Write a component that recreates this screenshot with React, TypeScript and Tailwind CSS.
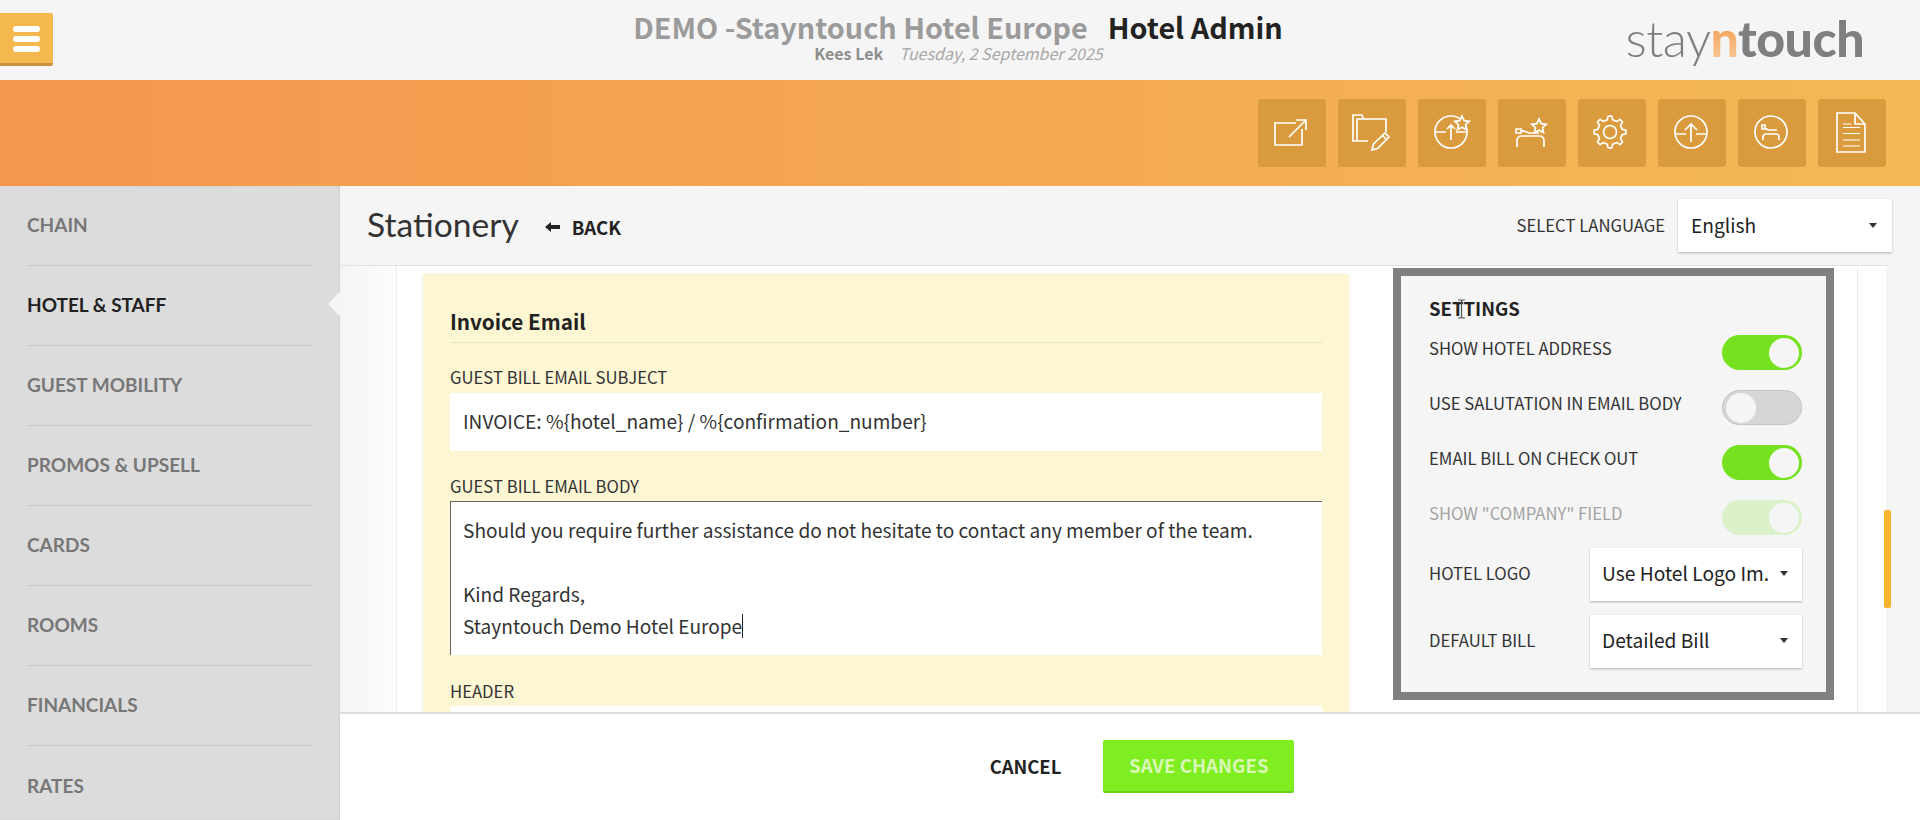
import * as React from "react";

const navigation = ["CHAIN", "HOTEL & STAFF", "GUEST MOBILITY", "PROMOS & UPSELL", "CARDS", "ROOMS", "FINANCIALS", "RATES"];

const toggles = [
  { label: "SHOW HOTEL ADDRESS", on: true },
  { label: "USE SALUTATION IN EMAIL BODY", on: false },
  { label: "EMAIL BILL ON CHECK OUT", on: true },
  { label: 'SHOW "COMPANY" FIELD', on: true, disabled: true },
];

function gearPath(cx: number, cy: number) {
  const pts: string[] = [];
  const teeth = 8;
  for (let i = 0; i < teeth; i++) {
    const a = (i * Math.PI * 2) / teeth - Math.PI / 2;
    const step = Math.PI / teeth;
    const p = (r: number, t: number) => `${(cx + r * Math.cos(t)).toFixed(1)} ${(cy + r * Math.sin(t)).toFixed(1)}`;
    pts.push(`${i === 0 ? "M" : "L"}${p(12.5, a - step * 0.55)}`);
    pts.push(`L${p(16, a - step * 0.3)}`);
    pts.push(`L${p(16, a + step * 0.3)}`);
    pts.push(`L${p(12.5, a + step * 0.55)}`);
  }
  return pts.join(" ") + "Z";
}

const STAR = "M44 17l2.2 4.7 5 .6-3.7 3.4 1 5-4.500-2.500-4.500 2.500 1-5-3.700-3.400 5-.6z";

function TileIcon({ index }: { index: number }) {
  const props = { fill: "none", stroke: "#fff", strokeWidth: 1.7 };
  return (
    <svg viewBox="0 0 68 68" className="w-[68px] h-[68px]" {...props}>
      {index === 0 && (
        <>
          <path d="M38 24H17v22h27V30" />
          <path d="M31 38l17-17M38 21h10v10" />
        </>
      )}
      {index === 1 && (
        <>
          <path d="M30 42H15V16h9l1.500 4H48v13" />
          <path d="M19 42V20h6" />
          <path d="M34 51l1.500-6L47 34l4 4-11.500 11.500zM44.500 36.500l4 4" />
        </>
      )}
      {index === 2 && (
        <>
          <circle cx="33" cy="33" r="16" />
          <path d="M17 33h11M38 33h11M33 41V26M29 30l4-4 4 4" />
          <path d={STAR} fill="#da9a3e" />
        </>
      )}
      {index === 3 && (
        <>
          <path d="M19 48v-6c0-3 2-5 5-5h17c3 0 5 2 5 5v6" />
          <path d="M18 30h5v4h-5zM23 31l8 3h10" />
          <path d={STAR} transform="translate(-3 3)" fill="#da9a3e" />
        </>
      )}
      {index === 4 && (
        <>
          <path d={gearPath(32, 33)} strokeLinejoin="round" />
          <circle cx="32" cy="33" r="6.500" />
        </>
      )}
      {index === 5 && (
        <>
          <circle cx="33" cy="33" r="16" />
          <path d="M17 35h11M38 35h11M33 43V25M27 31l6-6 6 6" />
        </>
      )}
      {index === 6 && (
        <>
          <circle cx="33" cy="33" r="16" />
          <path d="M25 41v-3c0-2 1-3 3-3h10c2 0 3 1 3 3v3M24 26h3v4h-3zM27 29l3 2h9" />
        </>
      )}
      {index === 7 && (
        <>
          <path d="M19 14h18l10 11v28H19z" />
          <path d="M37 14v11h10" />
          <path d="M25 25h8M25 28.500h17M25 34.500h17M25 41h17M25 47h17" strokeWidth="1.200" />
        </>
      )}
    </svg>
  );
}

function Toggle({ label, on, disabled }: { label: string; on: boolean; disabled?: boolean }) {
  return (
    <div className="flex justify-between">
      <span className={`text-[16.7px] leading-[27px] ${disabled ? "text-[#a3a3a3]" : "text-[#333]"}`}>{label}</span>
      <span
        className={`flex items-center h-[35px] w-[80px] rounded-full px-[3px] ${on ? "justify-end bg-[#76e21f]" : "justify-start bg-[#d6d6d6] border border-[#c4c4c4]"} ${disabled ? "opacity-20" : ""}`}
      >
        <span className="h-[30px] w-[30px] rounded-full bg-[#f5f5f5]" />
      </span>
    </div>
  );
}

function Caret() {
  return (
    <svg viewBox="0 0 8 5" className="w-[8px] h-[5px] shrink-0">
      <path d="M0 0h8L4 5z" fill="#333" />
    </svg>
  );
}

function SelectBox({ value, className }: { value: string; className: string }) {
  return (
    <div className={`flex items-center justify-between bg-white h-[53px] text-[19.2px] whitespace-nowrap text-[#222] shadow-[0_1px_2px_rgba(0,0,0,0.28)] ${className}`}>
      <span>{value}</span>
      <Caret />
    </div>
  );
}

export default function App() {
  return (
    <div className="w-[1920px] h-[820px] overflow-hidden flex flex-col relative bg-[#f5f5f5] font-['Noto_Sans_CJK_SC','Liberation_Sans',sans-serif]">
      {/* Top header */}
      <header className="h-[80px] shrink-0 flex items-start justify-between relative">
        <button className="mt-[13px] w-[53px] h-[53px] bg-[#f5b84e] border-b-[3px] border-[#c9923f] rounded-r-[2px] flex flex-col items-center gap-[4px] pt-[13px]">
          <span className="w-[27px] h-[6px] bg-white rounded-full" />
          <span className="w-[27px] h-[6px] bg-white rounded-full" />
          <span className="w-[27px] h-[6px] bg-white rounded-full" />
        </button>
        <div className="absolute left-0 right-0 top-[11px] flex flex-col items-center">
          <div className="text-[28.8px] leading-[32px] font-bold pr-[4px]">
            <span className="text-[#9b9b9b]">DEMO -Stayntouch Hotel Europe</span>
            <span className="text-[#222] ml-[20px]">Hotel Admin</span>
          </div>
          <div className="text-[16px] leading-[20px] pr-[3px]">
            <span className="text-[#8e8e8e] font-semibold">Kees Lek</span>
            <span className="text-[#a8a8a8] italic ml-[16px]">Tuesday, 2 September 2025</span>
          </div>
        </div>
        <div className="mt-[7px] mr-[56px] text-[50px] leading-[62px] font-['Lato',sans-serif] text-[#7f7f7f] tracking-[-0.5px]">
          <span className="font-light">stay</span>
          <span className="font-black bg-gradient-to-b from-[#ee8a22] to-[#f9d3a8] bg-clip-text text-transparent">n</span>
          <span className="font-black">touch</span>
        </div>
      </header>

      {/* Orange action bar */}
      <div className="h-[106px] shrink-0 bg-gradient-to-r from-[#f4964f] to-[#f4b955] flex items-center justify-end gap-[12px] pr-[34px]">
        {[0, 1, 2, 3, 4, 5, 6, 7].map((i) => (
          <div key={i} className="w-[68px] h-[68px] rounded-[3px] bg-[#da9a3e]">
            <TileIcon index={i} />
          </div>
        ))}
      </div>

      <div className="flex flex-1 min-h-0">
        {/* Sidebar */}
        <nav className="w-[340px] shrink-0 bg-[#dcdcdc] relative shadow-[inset_-1px_0_2px_rgba(0,0,0,0.06)]">
          {navigation.map((name, i) => (
            <div
              key={name}
              className={`h-[80px] ml-[27px] mr-[28px] flex items-center font-['Lato',sans-serif] font-bold text-[19px] ${i < 7 ? "border-b border-[#c8c8c8]" : ""} ${i === 1 ? "text-[#222]" : "text-[#777]"}`}
            >
              {name}
            </div>
          ))}
          <div className="absolute left-[328px] top-[106px] w-0 h-0 border-y-[12px] border-y-transparent border-r-[12px] border-r-[#f5f5f5]" />
        </nav>

        <main className="flex-1 min-w-0 flex flex-col">
          {/* Title row */}
          <div className="h-[80px] shrink-0 border-b border-[#e2e2e2] mr-[32px] pl-[27px] flex items-center justify-between">
            <div className="flex items-center">
              <h1 className="text-[33.6px] text-[#333] font-['Lato',sans-serif] leading-[40px] -mt-[3px]">Stationery</h1>
              <svg viewBox="0 0 15 10" className="ml-[26px] mt-[3px] w-[15px] h-[10px]">
                <path d="M0 5l6-5v3h9v4H6v3z" fill="#222" />
              </svg>
              <span className="ml-[12px] mt-[3px] text-[18.6px] font-semibold text-[#222]">BACK</span>
            </div>
            <div className="flex items-center -mr-[4px]">
              <span className="text-[16.7px] text-[#333] mr-[13px]">SELECT LANGUAGE</span>
              <SelectBox value="English" className="w-[214px] pl-[13px] pr-[15px]" />
            </div>
          </div>

          {/* Form body */}
          <div className="flex-1 min-h-0 flex overflow-hidden">
            <div className="w-[56px] shrink-0 bg-gradient-to-r from-[#f5f5f5] to-[#fcfcfc]" />
            <div className="flex-1 flex bg-white border-l border-[#ececec] pl-[26px]">
              <section className="w-[926px] shrink-0 mt-[8px] bg-[#fdf6d3] rounded-t-[3px] shadow-[0_0_3px_rgba(0,0,0,0.1)] px-[27px]">
                <h2 className="text-[20.7px] font-semibold text-[#222] leading-[40px] h-[69px] pt-[27px] border-b border-[#e8e2c4]">Invoice Email</h2>
                <label className="block mt-[20px] text-[16.7px] leading-[28px] text-[#333]">GUEST BILL EMAIL SUBJECT</label>
                <div className="mt-[2px] h-[58px] bg-white px-[13px] text-[19.1px] leading-[56px] text-[#333]">
                  INVOICE: %{"{"}hotel_name{"}"} / %{"{"}confirmation_number{"}"}
                </div>
                <label className="block mt-[21px] text-[16.7px] leading-[28px] text-[#333]">GUEST BILL EMAIL BODY</label>
                <div className="mt-[1px] h-[154px] bg-white border-l border-t border-[#666] px-[12px] pt-[12px] text-[19.1px] leading-[32px] text-[#333]">
                  <div>Should you require further assistance do not hesitate to contact any member of the team.</div>
                  <div className="h-[32px]" />
                  <div>Kind Regards,</div>
                  <div className="flex items-center">
                    Stayntouch Demo Hotel Europe<span className="w-px h-[24px] bg-[#222]" />
                  </div>
                </div>
                <label className="block mt-[22px] text-[16.7px] leading-[28px] text-[#333]">HEADER</label>
                <div className="mt-[1px] h-[58px] bg-white" />
              </section>

              <aside className="w-[441px] h-[432px] shrink-0 ml-[44px] mt-[2px] border-[8px] border-[#808080] bg-[#f5f5f5] pl-[28px] pr-[24px] pt-[15px] relative">
                <h3 className="text-[18.5px] leading-[34px] font-semibold text-[#222]">SETTINGS</h3>
                <div className="mt-[10px] flex flex-col gap-[20px]">
                  {toggles.map((t) => (
                    <Toggle key={t.label} label={t.label} on={t.on} disabled={t.disabled} />
                  ))}
                </div>
                <div className="mt-[13px] flex items-center justify-between">
                  <span className="text-[16.7px] text-[#333] pb-[2px]">HOTEL LOGO</span>
                  <SelectBox value="Use Hotel Logo Im." className="w-[212px] pl-[12px] pr-[14px] pb-[2px]" />
                </div>
                <div className="mt-[14px] flex items-center justify-between">
                  <span className="text-[16.7px] text-[#333] pb-[2px]">DEFAULT BILL</span>
                  <SelectBox value="Detailed Bill" className="w-[212px] pl-[12px] pr-[14px] pb-[2px]" />
                </div>
                {/* mouse cursor over the heading */}
                <svg viewBox="0 0 9 20" className="absolute left-[56px] top-[23px] w-[9px] h-[20px]" fill="none" stroke="#555" strokeWidth="1.200">
                  <path d="M1 1h2.500l1 1 1-1H8M4.500 2v16M1 19h2.500l1-1 1 1H8" />
                </svg>
              </aside>

              <div className="ml-[23px] w-[29px] shrink-0 border-l border-[#ececec]" />
              <div className="flex-1 bg-[#f5f5f5]" />
            </div>
          </div>

          {/* Footer */}
          <div className="h-[108px] shrink-0 bg-white border-t-2 border-[#dcdcdc] flex items-start justify-center pl-[24px] pt-[26px]">
            <button className="h-[53px] text-[18.4px] font-semibold text-[#222] mr-[42px]">CANCEL</button>
            <button className="w-[191px] h-[53px] bg-[#7eee20] border-b-2 border-[#6fd31c] rounded-[2px] text-[18.7px] font-semibold text-[#d9f8b5]">SAVE CHANGES</button>
          </div>
        </main>
      </div>

      {/* Scroll indicator */}
      <div className="absolute left-[1884px] top-[510px] w-[7px] h-[98px] rounded-[2px] bg-[#f7b32b]" />
    </div>
  );
}
